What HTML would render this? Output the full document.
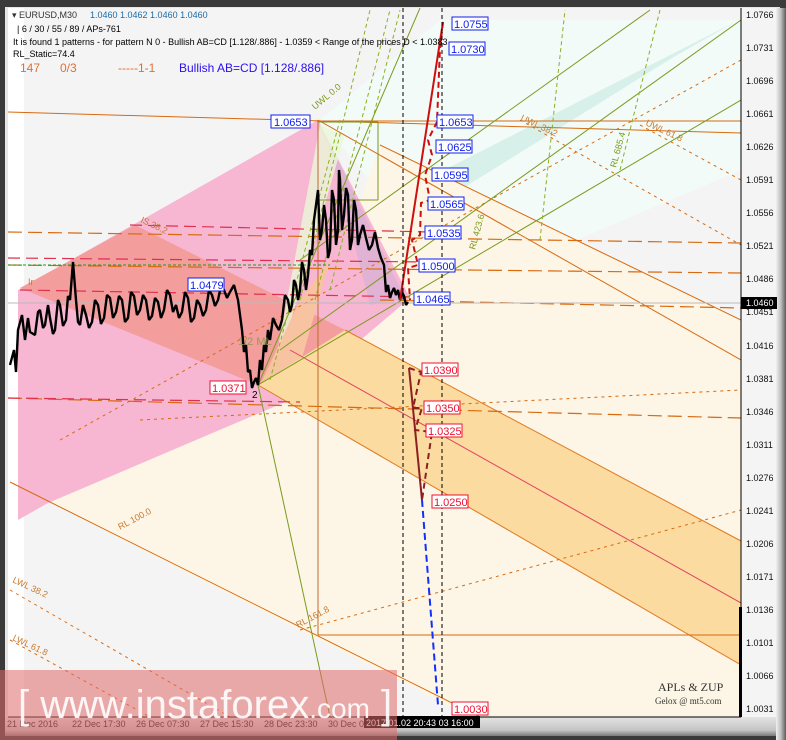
<!DOCTYPE html>
<html><head><meta charset="utf-8"><style>
html,body{margin:0;padding:0;background:#3a3a3a;}
body{width:786px;height:740px;overflow:hidden;position:relative;font-family:"Liberation Sans",sans-serif;}
svg{position:absolute;left:0;top:0;}
</style></head><body>
<svg width="786" height="740" viewBox="0 0 786 740" xmlns="http://www.w3.org/2000/svg" font-family="Liberation Sans, sans-serif">
<defs>
<linearGradient id="bev" x1="0" x2="1"><stop offset="0" stop-color="#f0f0f0"/><stop offset="0.5" stop-color="#bdbdbd"/><stop offset="1" stop-color="#5a5a5a"/></linearGradient>
<linearGradient id="bevb" x1="0" y1="0" x2="0" y2="1"><stop offset="0" stop-color="#e4e4e4"/><stop offset="0.7" stop-color="#c4c4c4"/><stop offset="1" stop-color="#7a7a7a"/></linearGradient>
<clipPath id="pl"><rect x="8" y="8" width="733" height="709"/></clipPath>
</defs>
<rect x="0" y="0" width="786" height="740" fill="#3a3a3a"/>
<rect x="5" y="7" width="775" height="729" fill="#e6e6e6"/>
<rect x="5" y="717" width="775" height="19" fill="url(#bevb)"/>
<rect x="8" y="8" width="770" height="709" fill="#f4f4f4"/>
<rect x="776" y="8" width="10" height="732" fill="url(#bev)"/>
<g clip-path="url(#pl)">
<rect x="8" y="8" width="733" height="709" fill="#f4f4f4"/>
<rect x="8" y="8" width="16" height="709" fill="#ffffff"/>
<polygon points="320,120 440,20 741,20 741,170 460,290" fill="#f2fbf7"/>
<polygon points="405,190 735,22 672,58 420,215" fill="#d8f0ea"/>
<polygon points="10,482 48,503 290,400 380,145 741,320 741,717 470,717" fill="#fdf5e5"/>
<polygon points="18,290 318,120 410,298 290,400 48,503 18,520" fill="#f7b6d2"/>
<polygon points="318,120 405,298 370,305 330,150" fill="#e0b2d4"/>
<polygon points="20,288 135,225 345,330 290,402 258,385" fill="#f39d9d"/>
<polygon points="320,125 345,135 300,290 270,390" fill="#eaf7d8" opacity="0.8"/>
<polygon points="300,300 330,260 290,400 260,385" fill="#f8c3a0"/>
<polygon points="258,385 345,330 741,541 741,665" fill="#fcdba0"/>
<line x1="345" y1="330" x2="741" y2="541" stroke="#e07a20" stroke-width="1"/>
<line x1="258" y1="385" x2="741" y2="665" stroke="#e07a20" stroke-width="1"/>
<line x1="290" y1="350" x2="741" y2="603" stroke="#e04060" stroke-width="1"/>
<line x1="380" y1="145" x2="741" y2="320" stroke="#d86a10" stroke-width="1"/>
<line x1="10" y1="482" x2="480" y2="717" stroke="#d86a10" stroke-width="1"/>
<line x1="8" y1="112" x2="741" y2="133" stroke="#d86a10" stroke-width="1"/>
<line x1="318" y1="121" x2="741" y2="121" stroke="#d86a10" stroke-width="1"/>
<line x1="318" y1="120" x2="318" y2="635" stroke="#c06a30" stroke-width="1"/>
<line x1="318" y1="635" x2="741" y2="635" stroke="#d86a10" stroke-width="1"/>
<line x1="318" y1="120" x2="741" y2="360" stroke="#d86a10" stroke-width="1"/>
<g stroke="#d86a10" stroke-width="1.2" stroke-dasharray="14,6" fill="none">
<line x1="8" y1="232" x2="741" y2="243"/><line x1="8" y1="265" x2="741" y2="273"/>
<line x1="380" y1="300" x2="741" y2="308"/><line x1="8" y1="398" x2="741" y2="418"/>
</g>
<g stroke="#e03050" stroke-width="1.2" stroke-dasharray="12,6" fill="none">
<line x1="130" y1="225" x2="430" y2="232"/><line x1="8" y1="258" x2="430" y2="262"/>
<line x1="20" y1="290" x2="420" y2="297"/><line x1="8" y1="398" x2="300" y2="402"/>
</g>
<g stroke="#d86a10" stroke-width="1" stroke-dasharray="3,4" fill="none">
<line x1="60" y1="440" x2="741" y2="60"/><line x1="140" y1="420" x2="741" y2="390"/>
<line x1="10" y1="590" x2="230" y2="717"/><line x1="10" y1="640" x2="150" y2="717"/>
<line x1="520" y1="120" x2="741" y2="245"/><line x1="640" y1="125" x2="741" y2="180"/>
<line x1="300" y1="630" x2="741" y2="510"/>
</g>
<g stroke="#7a9a20" stroke-width="1" fill="none">
<line x1="258" y1="385" x2="741" y2="100"/><line x1="280" y1="350" x2="741" y2="20"/>
<line x1="300" y1="260" x2="650" y2="10"/><line x1="258" y1="385" x2="420" y2="8"/>
<line x1="258" y1="385" x2="330" y2="717"/><line x1="318" y1="122" x2="378" y2="122"/>
<line x1="378" y1="122" x2="378" y2="200"/><line x1="318" y1="200" x2="378" y2="200"/>
</g>
<g stroke="#8ab020" stroke-width="1" stroke-dasharray="4,3" fill="none">
<line x1="300" y1="300" x2="370" y2="10"/><line x1="315" y1="300" x2="390" y2="10"/>
<line x1="330" y1="290" x2="400" y2="10"/><line x1="270" y1="380" x2="340" y2="120"/>
<line x1="540" y1="240" x2="565" y2="10"/><line x1="620" y1="170" x2="660" y2="10"/>
</g>
<line x1="8" y1="265" x2="330" y2="265" stroke="#229922" stroke-dasharray="3,2"/>
<line x1="8" y1="303" x2="741" y2="303" stroke="#bbbbbb"/>
<polyline fill="none" stroke="#000" stroke-width="2.4" stroke-linejoin="bevel" points="10,365 14,350 16,372 18,330 22,315 25,340 28,318 30,332 35,335 38,312 40,310 43,328 45,325 48,305 50,318 53,334 55,330 58,300 60,305 63,326 66,320 68,296 70,300 73,262 76,300 78,322 80,325 83,305 86,315 89,328 92,322 95,300 98,305 101,324 104,318 107,295 110,298 113,318 116,312 119,296 122,300 125,322 128,318 131,292 134,296 137,315 140,310 143,295 146,300 149,320 152,316 155,298 158,302 161,318 164,310 167,290 170,295 173,312 176,305 179,318 182,312 185,292 188,298 191,322 194,318 197,300 200,305 203,316 206,310 209,290 212,295 215,306 218,300 221,286 224,290 227,298 230,292 234,285 238,300 240,315 242,330 244,352 246,345 248,372 250,370 252,388 254,382 256,378 258,385 260,360 262,370 264,345 266,352 268,330 270,340 273,318 276,325 279,330 282,320 285,295 288,300 290,312 292,305 294,280 296,285 298,300 300,290 302,262 304,270 306,290 308,275 310,250 312,255 314,220 316,205 318,190 320,240 322,230 324,205 326,220 328,258 330,250 332,190 334,200 336,245 338,230 339,170 340,180 342,230 344,215 346,188 348,195 350,250 352,240 354,200 356,210 358,245 360,235 363,225 366,238 369,250 372,245 375,232 378,248 381,258 384,265 386,292 388,285 390,298 392,292 394,288 396,295 398,290 400,300 402,292 404,296 406,305 408,302"/>
<line x1="400" y1="300" x2="443" y2="22" stroke="#cc1010" stroke-width="2"/>
<polyline fill="none" stroke="#cc1010" stroke-width="2" stroke-dasharray="6,4" points="443,22 440,48 437,122 428,140 432,155 425,175 430,200 421,203 420,235 412,240 418,265 408,268 410,300"/>
<line x1="409" y1="368" x2="422" y2="500" stroke="#8b2020" stroke-width="2"/>
<polyline fill="none" stroke="#8b2020" stroke-width="2" stroke-dasharray="6,4" points="409,368 421,372 413,408 422,408 415,430 432,432 422,500"/>
<line x1="422" y1="500" x2="438" y2="705" stroke="#1030ff" stroke-width="2" stroke-dasharray="7,4"/>
<g stroke="#000" stroke-width="1" stroke-dasharray="4,3"><line x1="403" y1="8" x2="403" y2="717"/><line x1="442" y1="8" x2="442" y2="717"/></g>
<g font-size="9" fill="#c87a30">
<text x="28" y="285">Ir</text><text x="140" y="222" transform="rotate(25 140 222)">IS 38.2</text>
<text x="120" y="530" transform="rotate(-28 120 530)">RL 100.0</text>
<text x="298" y="628" transform="rotate(-28 298 628)">RL 161.8</text>
<text x="12" y="582" transform="rotate(25 12 582)">LWL 38.2</text><text x="12" y="640" transform="rotate(25 12 640)">LWL 61.8</text>
<text x="520" y="120" transform="rotate(25 520 120)">UWL 38.2</text><text x="645" y="125" transform="rotate(25 645 125)">UWL 61.8</text>
</g>
<g font-size="9" fill="#7a9a20"><text x="475" y="250" transform="rotate(-75 475 250)">RL 423.6</text><text x="616" y="168" transform="rotate(-75 616 168)">RL 685.4</text><text x="315" y="110" transform="rotate(-40 315 110)">UWL 0.0</text><text x="238" y="345" fill="#999955" font-size="11">1/2 ML</text></g>
<g font-size="11" fill="#1020ee">
<g stroke="#1020ee" fill="#fff">
<rect x="452" y="17" width="36" height="13"/><rect x="449" y="42" width="36" height="13"/>
<rect x="437" y="115" width="36" height="13"/><rect x="436" y="140" width="36" height="13"/>
<rect x="432" y="168" width="36" height="13"/><rect x="428" y="197" width="36" height="13"/>
<rect x="425" y="226" width="36" height="13"/><rect x="419" y="259" width="36" height="13"/>
<rect x="414" y="292" width="36" height="13"/><rect x="271" y="115" width="39" height="13"/><rect x="188" y="278" width="36" height="13"/>
</g>
<text x="454" y="28">1.0755</text><text x="451" y="53">1.0730</text><text x="439" y="126">1.0653</text><text x="438" y="151">1.0625</text><text x="434" y="179">1.0595</text><text x="430" y="208">1.0565</text><text x="427" y="237">1.0535</text><text x="421" y="270">1.0500</text><text x="416" y="303">1.0465</text><text x="274" y="126">1.0653</text><text x="190" y="289">1.0479</text>
</g>
<g font-size="11" fill="#ee1030">
<g stroke="#ee1030" fill="#fff"><rect x="422" y="363" width="36" height="13"/><rect x="424" y="401" width="36" height="13"/><rect x="426" y="424" width="36" height="13"/><rect x="432" y="495" width="36" height="13"/><rect x="452" y="702" width="36" height="13"/><rect x="210" y="381" width="36" height="13"/></g>
<text x="424" y="374">1.0390</text><text x="426" y="412">1.0350</text><text x="428" y="435">1.0325</text><text x="434" y="506">1.0250</text><text x="454" y="713">1.0030</text><text x="212" y="392">1.0371</text>
</g>
<text x="252" y="398" font-size="10" fill="#000">2</text>
<text x="658" y="691" font-size="12" fill="#333" font-family="Liberation Serif, serif">APLs &amp; ZUP</text>
<text x="655" y="704" font-size="9" fill="#333" font-family="Liberation Serif, serif">Gelox @ mt5.com</text>
</g>
<line x1="741" y1="8" x2="741" y2="717" stroke="#000"/>
<line x1="8" y1="717" x2="741" y2="717" stroke="#000"/>
<rect x="739" y="607" width="3" height="110" fill="#000"/>
<g font-size="9" fill="#111">
<text x="746" y="18">1.0766</text><text x="746" y="51">1.0731</text><text x="746" y="84">1.0696</text><text x="746" y="117">1.0661</text><text x="746" y="150">1.0626</text><text x="746" y="183">1.0591</text><text x="746" y="216">1.0556</text><text x="746" y="249">1.0521</text><text x="746" y="282">1.0486</text><text x="746" y="315">1.0451</text><text x="746" y="349">1.0416</text><text x="746" y="382">1.0381</text><text x="746" y="415">1.0346</text><text x="746" y="448">1.0311</text><text x="746" y="481">1.0276</text><text x="746" y="514">1.0241</text><text x="746" y="547">1.0206</text><text x="746" y="580">1.0171</text><text x="746" y="613">1.0136</text><text x="746" y="646">1.0101</text><text x="746" y="679">1.0066</text><text x="746" y="712">1.0031</text>
</g>
<rect x="741" y="297" width="36" height="12" fill="#000"/><text x="746" y="306" font-size="9" fill="#fff">1.0460</text>
<g font-size="9" fill="#222"><text x="7" y="727">21 Dec 2016</text><text x="72" y="727">22 Dec 17:30</text><text x="136" y="727">26 Dec 07:30</text><text x="200" y="727">27 Dec 15:30</text><text x="264" y="727">28 Dec 23:30</text><text x="328" y="727">30 Dec 0</text></g>
<rect x="364" y="716" width="116" height="12" fill="#000"/><text x="366" y="726" font-size="9" fill="#fff">2017.01.02 20:43 03 16:00</text>
<g font-size="9">
<text x="12" y="18" fill="#333">▾ EURUSD,M30</text><text x="90" y="18" fill="#1a6aaa">1.0460 1.0462 1.0460 1.0460</text>
<text x="17" y="32" fill="#000">| 6 / 30 / 55 / 89 / APs-761</text>
<text x="13" y="45" fill="#000">It is found 1 patterns  -  for pattern N 0 - Bullish AB=CD [1.128/.886] - 1.0359 &lt; Range of the prices D &lt; 1.0383</text>
<text x="13" y="57" fill="#000">RL_Static=74.4</text>
</g>
<g font-size="12"><text x="20" y="72" fill="#e07030">147</text><text x="60" y="72" fill="#e07030">0/3</text><text x="118" y="72" fill="#e07030">-----1-1</text><text x="179" y="72" fill="#2a10ee">Bullish AB=CD [1.128/.886]</text></g>
<rect x="0" y="670" width="397" height="70" fill="#e06a6a" opacity="0.55"/>
<text x="18" y="718" font-size="40" fill="#fff" opacity="0.9">[  www.instaforex<tspan font-size="28">.com</tspan> ]</text>
</svg>
</body></html>
